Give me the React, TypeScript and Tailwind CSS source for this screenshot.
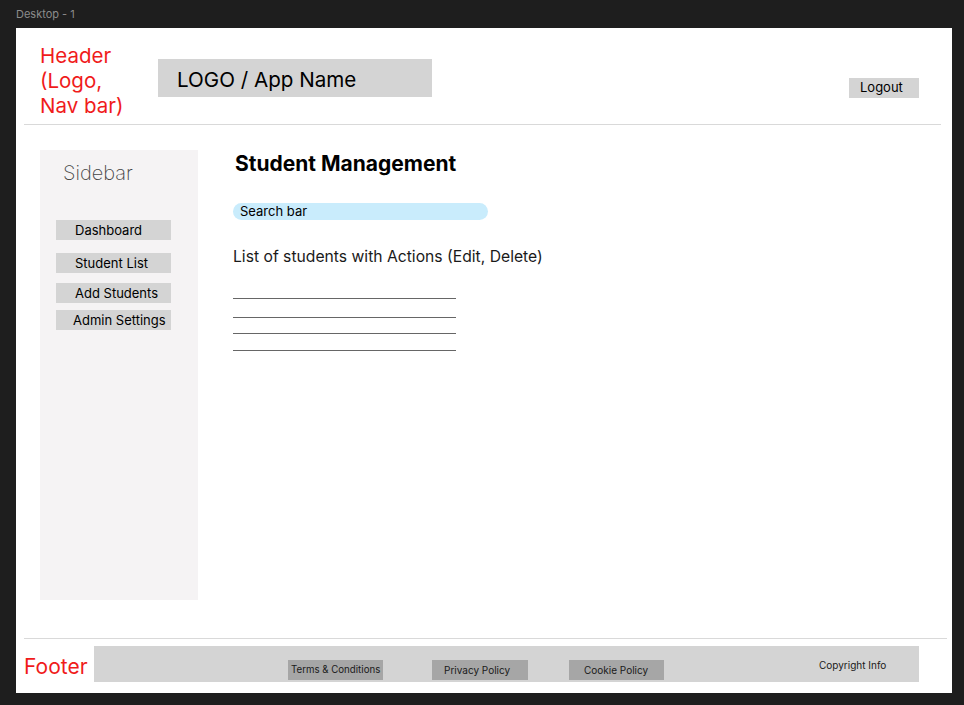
const sideItems = [
  { label: "Dashboard", mt: "mt-[35px]", pl: "pl-[19px]" },
  { label: "Student List", mt: "mt-[13px]", pl: "pl-[19px]" },
  { label: "Add Students", mt: "mt-[10px]", pl: "pl-[19px]" },
  { label: "Admin Settings", mt: "mt-[7px]", pl: "pl-[17px]" },
];

const footerLinks = [
  { label: "Terms & Conditions", ml: "ml-[194px]", w: "w-[95px]", pl: "pl-[3px]", size: "text-[9.7px]" },
  { label: "Privacy Policy", ml: "ml-[49px]", w: "w-[96px]", pl: "pl-[12px]", size: "text-[10px]" },
  { label: "Cookie Policy", ml: "ml-[41px]", w: "w-[95px]", pl: "pl-[15px]", size: "text-[10px]" },
];

const Header = () => (
  <header className="flex h-[96px] items-start">
    <div className="ml-[24px] mt-[15px] w-[118px] text-[20.5px] leading-[25px] text-[#f01b1b]">
      <p>Header</p>
      <p>(Logo,</p>
      <p>Nav bar)</p>
    </div>
    <div className="mt-[31px] flex h-[38px] w-[274px] items-center bg-[#d4d4d4] pl-[19px] pt-[5px] text-[20.6px] text-black">
      LOGO / App Name
    </div>
    <button
      type="button"
      className="ml-auto mr-[33px] mt-[50px] flex h-[20px] w-[70px] items-center bg-[#d4d4d4] pl-[11px] text-[13px] text-black"
    >
      Logout
    </button>
  </header>
);

const Sidebar = () => (
  <aside className="ml-[24px] flex h-[450px] w-[158px] flex-col bg-[#f5f3f4] pl-[16px]">
    <p className="ml-[7px] mt-[11px] text-[20px] font-extralight leading-[24px] text-[#444]">
      Sidebar
    </p>
    {sideItems.map((item) => (
      <button
        key={item.label}
        type="button"
        className={`${item.mt} ${item.pl} flex h-[20px] w-[115px] items-center bg-[#d4d4d4] pt-[2px] text-[13px] text-black`}
      >
        {item.label}
      </button>
    ))}
  </aside>
);

const Main = () => (
  <main className="ml-[35px] flex flex-col">
    {/* 제목 */}
    <h1 className="ml-[2px] mt-[2px] text-[21px] font-bold leading-[24px] text-black">
      Student Management
    </h1>
    <div className="mt-[27px] flex h-[17px] w-[255px] items-center rounded-full bg-[#c9ecfc] pl-[7px] text-[13px] text-black">
      Search bar
    </div>
    <p className="mt-[27px] text-[15.7px] leading-[20px] text-[#1a1a1a]">
      List of students with Actions (Edit, Delete)
    </p>
    <div className="mt-[31px] flex flex-col">
      <div className="h-px w-[223px] bg-[#666]" />
      <div className="mt-[18px] h-px w-[223px] bg-[#666]" />
      <div className="mt-[15px] h-px w-[223px] bg-[#666]" />
      <div className="mt-[16px] h-px w-[223px] bg-[#666]" />
    </div>
  </main>
);

const Footer = () => (
  <footer className="flex flex-col">
    <div className="ml-[8px] h-px w-[923px] bg-[#d9d9d9]" />
    <div className="mt-[7px] flex items-center">
      <p className="ml-[8px] w-[70px] pt-[4px] text-[21px] leading-[25px] text-[#f01b1b]">Footer</p>
      <div className="flex h-[36px] w-[825px] items-start bg-[#d4d4d4]">
        {footerLinks.map((link) => (
          <button
            key={link.label}
            type="button"
            className={`${link.ml} ${link.w} ${link.pl} ${link.size} mt-[14px] flex h-[20px] items-center whitespace-nowrap bg-[#a6a6a6] pt-[1px] text-[#1a1a1a]`}
          >
            {link.label}
          </button>
        ))}
        <p className="ml-[155px] mt-[12px] whitespace-nowrap text-[10px] leading-[14px] text-[#1a1a1a]">
          Copyright Info
        </p>
      </div>
    </div>
  </footer>
);

export default function App() {
  return (
    <div
      className="h-[705px] w-full overflow-hidden bg-[#1e1e1e]"
      style={{ fontFamily: "Inter, 'Liberation Sans', sans-serif" }}
    >
      <p className="h-[28px] pl-[16px] pt-[6px] text-[11px] leading-[16px] text-[#8c8c8c]">
        Desktop - 1
      </p>
      <div className="ml-[16px] flex h-[665px] w-[936px] flex-col bg-white">
        <Header />
        <div className="ml-[8px] h-px w-[917px] bg-[#d9d9d9]" />
        <div className="mt-[25px] flex h-[488px] items-start">
          <Sidebar />
          <Main />
        </div>
        <Footer />
      </div>
    </div>
  );
}
